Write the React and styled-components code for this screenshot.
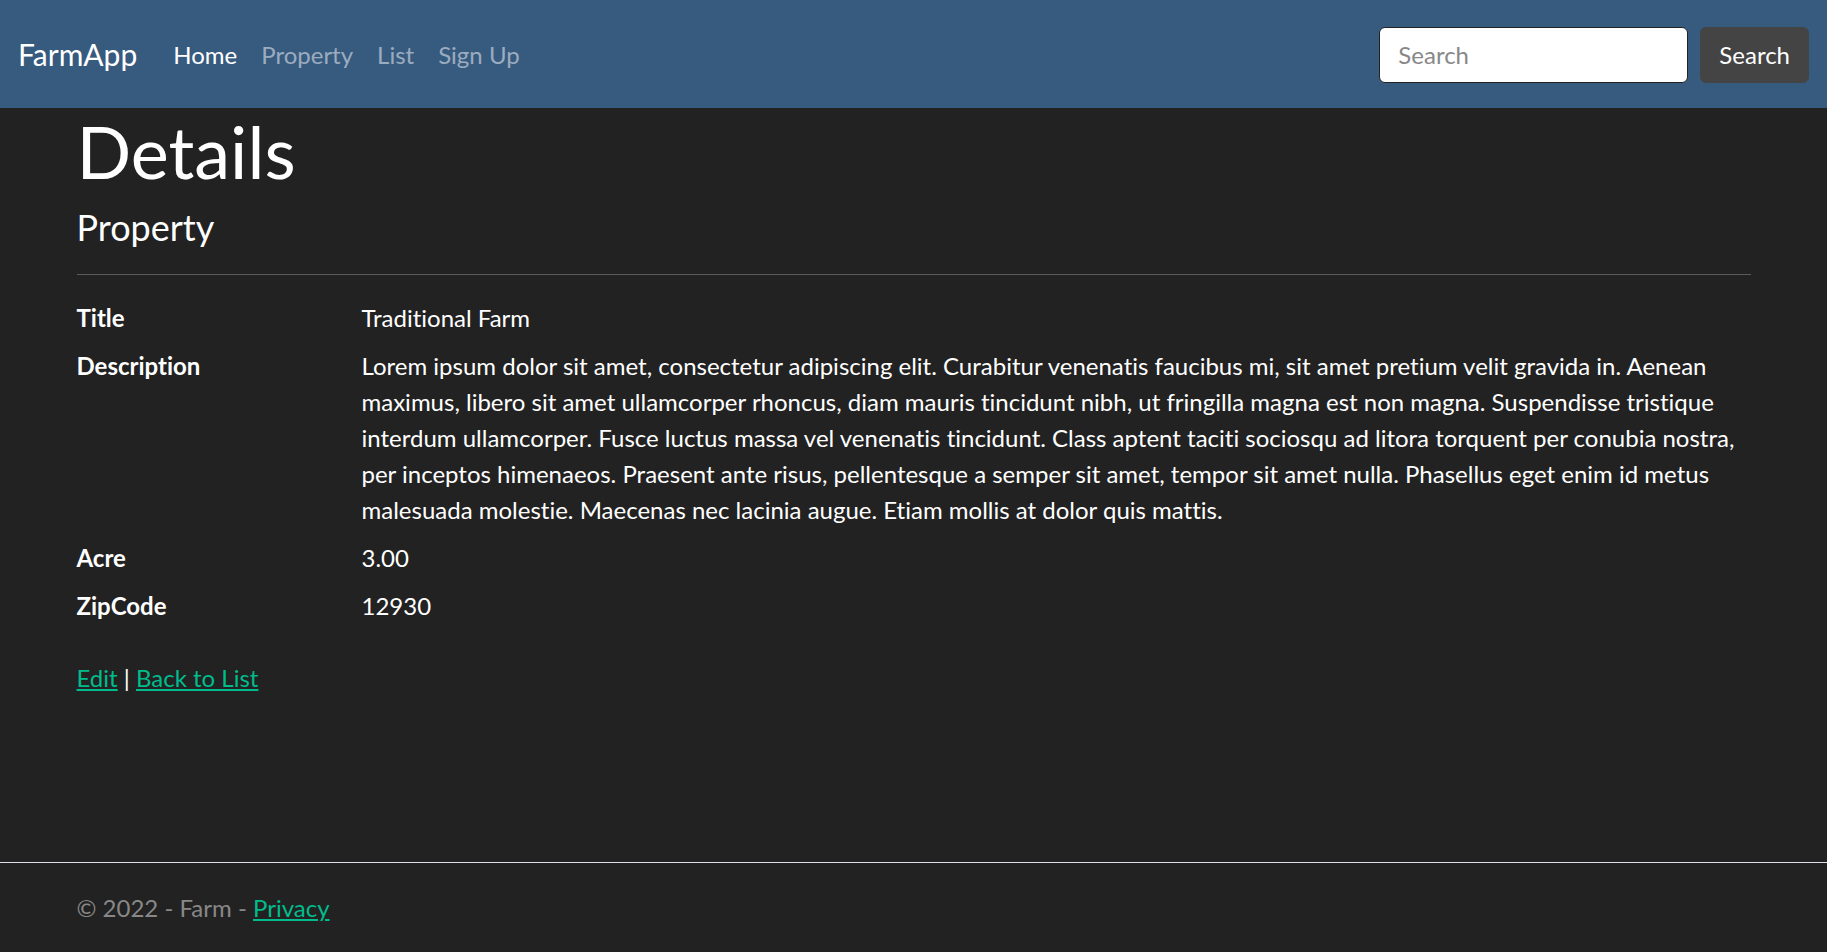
import React from 'react';
import styled, { createGlobalStyle } from 'styled-components';

const GlobalStyle = createGlobalStyle`
  html, body {
    margin: 0;
    padding: 0;
  }
  body {
    background-color: #222;
    color: #fff;
    font-family: Lato, "Noto Sans", "Liberation Sans", sans-serif;
    font-size: 24px;
    line-height: 1.5;
    font-variant-ligatures: none;
  }
  * {
    box-sizing: border-box;
  }
`;

const Page = styled.div`
  display: flex;
  flex-direction: column;
  min-height: 100vh;
`;

const Navbar = styled.nav`
  display: flex;
  align-items: center;
  height: 108px;
  padding: 1px 18px 0;
  background-color: #375a7f;
`;

const Brand = styled.a`
  font-size: 30px;
  line-height: 1.5;
  color: #fff;
  text-decoration: none;
  margin-right: 24px;
`;

const NavItems = styled.ul`
  display: flex;
  list-style: none;
  margin: 0;
  padding: 0;
`;

const NavLink = styled.a`
  display: block;
  padding: 0 12px;
  color: ${(p) => (p.$active ? '#fff' : 'rgba(255, 255, 255, 0.5)')};
  text-decoration: none;
`;

const SearchForm = styled.form`
  display: flex;
  gap: 12px;
  margin-left: auto;
`;

const SearchInput = styled.input`
  width: 309px;
  height: 56px;
  padding: 9px 18px;
  font-family: inherit;
  font-size: 24px;
  color: #444;
  background: #fff;
  border: 1px solid #222;
  border-radius: 6px;

  &::placeholder {
    color: #888;
  }
`;

const SearchButton = styled.button`
  height: 56px;
  padding: 9px 18px;
  font-family: inherit;
  font-size: 24px;
  color: #fff;
  background: #444;
  border: 1px solid #444;
  border-radius: 6px;
`;

const Container = styled.main`
  width: 100%;
  max-width: 1710px;
  margin: 0 auto;
  padding: 0 18px;
`;

const Heading = styled.h1`
  font-size: 72px;
  font-weight: 400;
  line-height: 1.2;
  margin: 0 0 12px;
`;

const SubHeading = styled.h4`
  font-size: 36px;
  font-weight: 400;
  line-height: 1.2;
  margin: 0;
`;

const Divider = styled.hr`
  border: 0;
  border-top: 1px solid #5a5a5a;
  margin: 24px 0 25px;
`;

const DetailList = styled.dl`
  display: grid;
  grid-template-columns: 249px 1fr;
  column-gap: 36px;
  row-gap: 12px;
  margin: 0 0 36px;
`;

const Term = styled.dt`
  font-weight: 700;
`;

const Value = styled.dd`
  margin: 0;
`;

const Actions = styled.div`
  color: #fff;
`;

const TextLink = styled.a`
  color: #00bc8c;
  text-decoration: underline;
`;

const Footer = styled.footer`
  margin-top: auto;
  border-top: 1px solid #dee2e6;
  line-height: 89px;
  color: #888;
`;

const FooterInner = styled.div`
  max-width: 1710px;
  margin: 0 auto;
  padding: 0 18px;
`;

const details = [
  { term: 'Title', value: 'Traditional Farm' },
  {
    term: 'Description',
    value:
      'Lorem ipsum dolor sit amet, consectetur adipiscing elit. Curabitur venenatis faucibus mi, sit amet pretium velit gravida in. Aenean maximus, libero sit amet ullamcorper rhoncus, diam mauris tincidunt nibh, ut fringilla magna est non magna. Suspendisse tristique interdum ullamcorper. Fusce luctus massa vel venenatis tincidunt. Class aptent taciti sociosqu ad litora torquent per conubia nostra, per inceptos himenaeos. Praesent ante risus, pellentesque a semper sit amet, tempor sit amet nulla. Phasellus eget enim id metus malesuada molestie. Maecenas nec lacinia augue. Etiam mollis at dolor quis mattis.',
  },
  { term: 'Acre', value: '3.00' },
  { term: 'ZipCode', value: '12930' },
];

const navLinks = [
  { label: 'Home', active: true },
  { label: 'Property' },
  { label: 'List' },
  { label: 'Sign Up' },
];

export default function App() {
  return (
    <Page>
      <GlobalStyle />
      <Navbar>
        <Brand href="#">FarmApp</Brand>
        <NavItems>
          {navLinks.map((l) => (
            <li key={l.label}>
              <NavLink href="#" $active={l.active}>
                {l.label}
              </NavLink>
            </li>
          ))}
        </NavItems>
        <SearchForm onSubmit={(e) => e.preventDefault()}>
          <SearchInput type="search" placeholder="Search" />
          <SearchButton type="submit">Search</SearchButton>
        </SearchForm>
      </Navbar>

      <Container>
        <Heading>Details</Heading>
        <div>
          <SubHeading>Property</SubHeading>
          <Divider />
          <DetailList>
            {details.map((d) => (
              <React.Fragment key={d.term}>
                <Term>{d.term}</Term>
                <Value>{d.value}</Value>
              </React.Fragment>
            ))}
          </DetailList>
        </div>
        <Actions>
          <TextLink href="#">Edit</TextLink> | <TextLink href="#">Back to List</TextLink>
        </Actions>
      </Container>

      <Footer>
        <FooterInner>
          &copy; 2022 - Farm - <TextLink href="#">Privacy</TextLink>
        </FooterInner>
      </Footer>
    </Page>
  );
}
